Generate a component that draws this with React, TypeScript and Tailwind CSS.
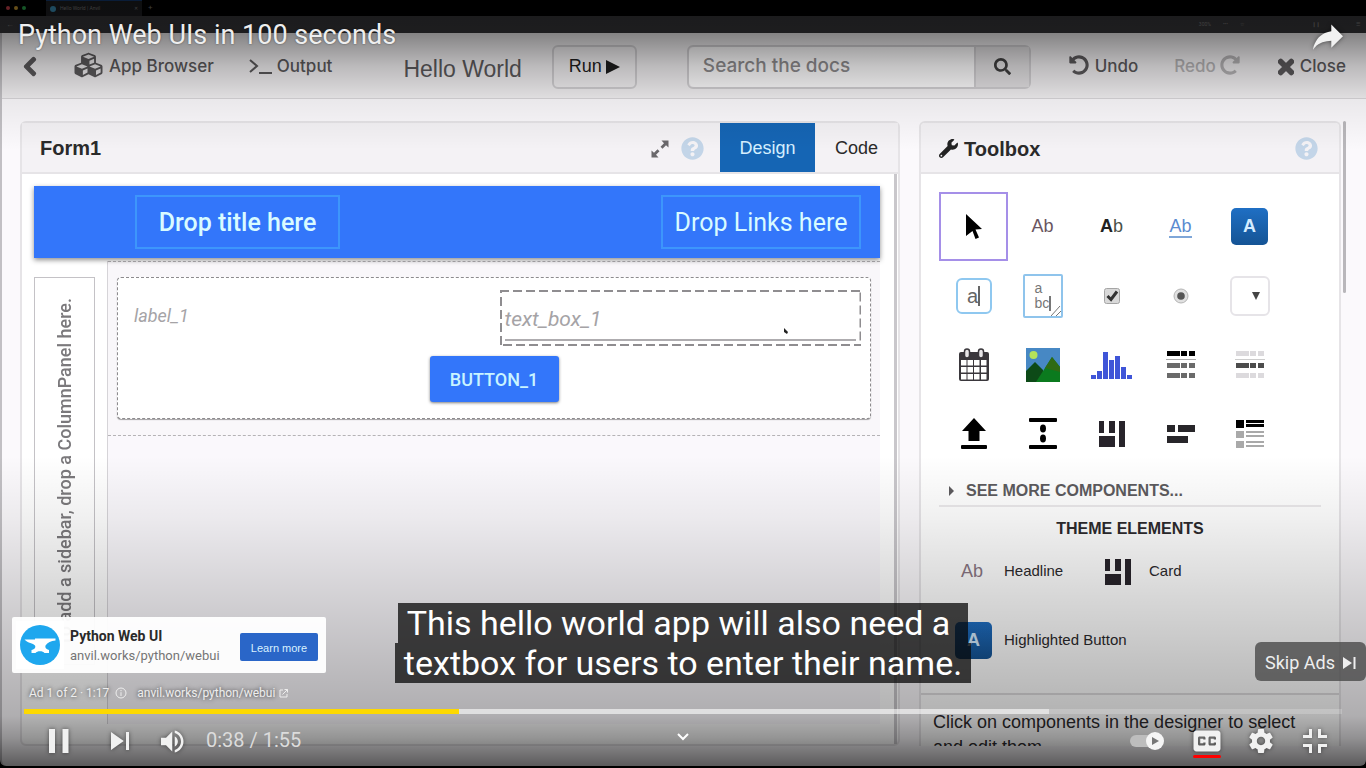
import type { ReactNode } from "react";
import {
  FaChevronLeft,
  FaCubes,
  FaQuestionCircle,
  FaRedoAlt,
  FaSearch,
  FaTimes,
  FaUndoAlt,
  FaWrench,
} from "react-icons/fa";

/* ---------- Toolbox drawings ---------- */

function PointerIcon() {
  return (
    <svg viewBox="0 0 16 26" className="h-[26px] w-4">
      <path d="M0 0 16 15 9.500 15.500 13 23.500 9.500 25 6.500 17 0 22Z" fill="#000" />
    </svg>
  );
}

function CheckIcon() {
  return (
    <svg viewBox="0 0 16 16" className="size-4">
      <rect x="0.5" y="0.5" width="15" height="15" rx="2" fill="#d9d9d9" stroke="#a5a5a5" />
      <path d="M3.500 8 7 11.500 13 3.500" fill="none" stroke="#333" strokeWidth="3" />
    </svg>
  );
}

function RadioIcon() {
  return (
    <svg viewBox="0 0 16 16" className="size-4">
      <circle cx="8" cy="8" r="7" fill="#e0e0e0" stroke="#b5b5b5" />
      <circle cx="8" cy="8" r="3.800" fill="#555" />
    </svg>
  );
}

function CalendarIcon() {
  return (
    <svg viewBox="0 0 32 34" className="h-[34px] w-8">
      <rect x="1" y="4" width="30" height="29" rx="2" fill="#3a373c" />
      <g fill="#fff">
        {[12, 19, 26].map((y) =>
          [3, 9.5, 16, 23].map((x) => <rect key={`${x}-${y}`} x={x} y={y} width="5.500" height="5.500" />),
        )}
      </g>
      <rect x="6.500" y="1" width="5" height="9" rx="2.500" fill="#e8e6e8" stroke="#3a373c" strokeWidth="1.500" />
      <rect x="20.500" y="1" width="5" height="9" rx="2.500" fill="#e8e6e8" stroke="#3a373c" strokeWidth="1.500" />
    </svg>
  );
}

function ImageIcon() {
  return (
    <svg viewBox="0 0 34 34" className="size-[34px]">
      <rect width="34" height="34" fill="#4788c4" />
      <circle cx="7.500" cy="7" r="4" fill="#b6e35a" />
      <path d="M0 23 9 14 17 22 17 34 0 34Z" fill="#0d4a17" />
      <path d="M10 34 26 9 34 19V34Z" fill="#0b7a1e" />
      <path d="M19 20 26 9 34 19V24Z" fill="#2f6a14" />
    </svg>
  );
}

function PlotIcon() {
  const bars = [4, 8, 27, 19, 23, 12, 4];
  return (
    <svg viewBox="0 0 42 28" className="h-7 w-[42px]">
      {bars.map((h, i) => (
        <rect key={i} x={i * 6} y={28 - h} width="5" height={h} fill="#3f55d8" />
      ))}
    </svg>
  );
}

function GridRow({ y, fill }: { y: number; fill: string }) {
  return (
    <g fill={fill}>
      <rect x="1" y={y} width="13" height="5" />
      <rect x="15" y={y} width="6" height="5" />
      <rect x="23" y={y} width="6" height="5" />
    </g>
  );
}

function DataGridIcon() {
  return (
    <svg viewBox="0 0 30 28" className="h-7 w-[30px]">
      <GridRow y={0} fill="#000" />
      <rect y="8" width="30" height="1" fill="#aaa" />
      <GridRow y={12} fill="#6a6a6a" />
      <GridRow y={22} fill="#6a6a6a" />
    </svg>
  );
}

function DataRowIcon() {
  return (
    <svg viewBox="0 0 30 28" className="h-7 w-[30px]">
      <GridRow y={0} fill="#dcdadd" />
      <rect y="8" width="30" height="1" fill="#ccc" />
      <GridRow y={12} fill="#4c4c4c" />
      <GridRow y={22} fill="#dcdadd" />
    </svg>
  );
}

function UploadIcon() {
  return (
    <svg viewBox="0 0 26 31" className="h-[31px] w-[26px]">
      <path d="M13 0 25 13H18.500V23H7.500V13H1Z" />
      <rect y="27" width="26" height="4" rx="1" />
    </svg>
  );
}

function SpacerIcon() {
  return (
    <svg viewBox="0 0 28 31" className="h-[31px] w-7">
      <rect width="28" height="4" rx="1" />
      <ellipse cx="14" cy="10.500" rx="3" ry="4" />
      <ellipse cx="14" cy="20.500" rx="3" ry="4" />
      <rect y="27" width="28" height="4" rx="1" />
    </svg>
  );
}

function ColumnsIcon() {
  return (
    <svg viewBox="0 0 26 26" className="size-[26px]" fill="#28242b">
      <rect width="5" height="12" />
      <rect x="10" width="6" height="12" />
      <rect y="15" width="16" height="11" />
      <rect x="20" width="6" height="26" />
    </svg>
  );
}

function FlowIcon() {
  return (
    <svg viewBox="0 0 28 18" className="h-[18px] w-7" fill="#28262a">
      <rect width="8" height="7" />
      <rect x="11" width="17" height="7" />
      <rect y="11" width="21" height="7" />
    </svg>
  );
}

function RepeatIcon() {
  return (
    <svg viewBox="0 0 28 28" className="size-7">
      <g fill="#000">
        <rect width="8" height="8" />
        <rect x="10" y="0" width="18" height="3" />
        <rect x="10" y="4" width="18" height="3" />
      </g>
      <g fill="#a9a9a9">
        <rect y="11" width="8" height="7" />
        <rect x="10" y="11" width="18" height="2" />
        <rect x="10" y="15" width="18" height="2" />
        <rect y="21" width="8" height="7" />
        <rect x="10" y="21" width="18" height="2" />
        <rect x="10" y="25" width="18" height="2" />
      </g>
    </svg>
  );
}

function ButtonChip() {
  return (
    <span className="flex size-[37px] items-center justify-center rounded-[5px] bg-linear-to-b from-[#1f6fc4] to-[#155495] text-[18px] font-bold text-[#d5ecff]">
      A
    </span>
  );
}

function TextAreaChip() {
  return (
    <span className="relative flex h-11 w-10 flex-col justify-center rounded-xs border-2 border-[#8fc4ec] pl-2.5 text-left text-[14px] leading-[15px] text-[#777]">
      <span>a</span>
      <span className="self-start border-r-2 border-[#777]">bc</span>
      <svg viewBox="0 0 10 10" className="absolute right-0 bottom-0 size-2.5" stroke="#777">
        <path d="M0 10 9 0M5 10 10 5" fill="none" />
      </svg>
    </span>
  );
}

const tools: { name: string; icon: ReactNode }[] = [
  { name: "Pointer", icon: <PointerIcon /> },
  { name: "Label", icon: <span className="text-[18px] text-[#6a5561]">Ab</span> },
  {
    name: "Rich text",
    icon: (
      <span className="text-[18px] text-[#4a5148]">
        <b className="text-[#222]">A</b>b
      </span>
    ),
  },
  { name: "Link", icon: <span className="border-b-2 border-[#7fa6d8] text-[18px] leading-5 text-[#5b8bd0]">Ab</span> },
  { name: "Button", icon: <ButtonChip /> },
  {
    name: "Text box",
    icon: (
      <span className="flex size-9 items-center justify-center rounded-md border-2 border-[#8fc8f0] text-[20px] text-[#666]">
        <span className="border-r-2 border-[#666] leading-5">a</span>
      </span>
    ),
  },
  { name: "Text area", icon: <TextAreaChip /> },
  { name: "Check box", icon: <CheckIcon /> },
  { name: "Radio button", icon: <RadioIcon /> },
  {
    name: "Drop down",
    icon: (
      <span className="flex size-10 items-center justify-end rounded-md border-2 border-[#e6e4e8] pr-2">
        <svg viewBox="0 0 8 8" className="size-2" fill="#444">
          <path d="M0 0H8L4 8Z" />
        </svg>
      </span>
    ),
  },
  { name: "Date picker", icon: <CalendarIcon /> },
  { name: "Image", icon: <ImageIcon /> },
  { name: "Plot", icon: <PlotIcon /> },
  { name: "Data grid", icon: <DataGridIcon /> },
  { name: "Data row", icon: <DataRowIcon /> },
  { name: "File upload", icon: <UploadIcon /> },
  { name: "Spacer", icon: <SpacerIcon /> },
  { name: "Column panel", icon: <ColumnsIcon /> },
  { name: "Flow panel", icon: <FlowIcon /> },
  { name: "Repeating panel", icon: <RepeatIcon /> },
];

/* ---------- Recorded frame ---------- */

function BrowserChrome() {
  return (
    <div className="shrink-0 text-[5px] leading-none text-[#777]">
      <div className="flex h-4 items-center bg-black pl-1.5">
        <div className="flex w-10 gap-1">
          <span className="size-1 rounded-full bg-[#c8404a]" />
          <span className="size-1 rounded-full bg-[#c89a30]" />
          <span className="size-1 rounded-full bg-[#2aa84c]" />
        </div>
        <div className="flex h-full w-24 items-center gap-1 border-t border-[#143a70] bg-[#1c1d20] px-1">
          <span className="size-1.5 rounded-full bg-[#3a90b8]" />
          <span className="flex-1">Hello World | Anvil</span>
          <span>✕</span>
        </div>
        <span className="pl-1.5 text-[8px]">+</span>
      </div>
      <div className="flex h-[17px] items-center justify-between bg-[#353538] px-1.5">
        <span className="text-[8px]">←</span>
        <span className="flex gap-3">
          <span>300%</span>
          <span>•••</span>
          <span>☆</span>
          <span className="pr-1 pl-14">❙❙</span>
          <span className="pl-5">☰</span>
        </span>
      </div>
    </div>
  );
}

function TopBar() {
  return (
    <nav className="flex h-[66px] shrink-0 items-center border-b border-[#d8d6d9] bg-[#f0eef0] pt-0.5 pr-5 pl-5 font-['Inter',sans-serif] text-[17px] font-medium text-[#5b595b]">
      <button aria-label="Back" className="mr-9">
        <FaChevronLeft className="h-[21px] w-4" stroke="currentColor" strokeWidth="36" />
      </button>
      <button className="mr-[35px] flex items-center gap-1.5">
        <FaCubes className="mb-1 h-7 w-[29px]" />
        App Browser
      </button>
      <button className="mr-[71px] flex items-center gap-1">
        <svg viewBox="0 0 24 16" className="h-4 w-6" fill="none" stroke="currentColor" strokeWidth="2">
          <path d="M1 1 8 7 1 13M10 14H23" />
        </svg>
        Output
      </button>
      <h1 className="mr-[30px] pt-1.5 font-['Liberation_Sans',Arial,sans-serif] text-[23px] font-normal">Hello World</h1>
      <button className="mr-[50px] flex h-11 w-[85px] items-center justify-center gap-1 rounded-md border-2 border-[#d0ced1] font-['Liberation_Sans',Arial,sans-serif] text-[18px] text-[#1d1d1d]">
        Run
        <svg viewBox="0 0 14 14" className="size-3.5" fill="currentColor">
          <path d="M0 0 14 7 0 14Z" />
        </svg>
      </button>
      <form className="mr-[38px] flex h-11 min-w-0 flex-1 rounded-md border-2 border-[#d0ced1]">
        <input
          aria-label="Search the docs"
          placeholder="Search the docs"
          className="min-w-0 flex-1 rounded-l-md bg-[#fbfafb] px-3.5 text-[19px] font-medium placeholder:text-[#8d8b8d]"
        />
        <button
          type="button"
          aria-label="Search"
          className="flex w-[55px] items-center justify-center border-l-2 border-[#d0ced1] bg-[#e2e0e2]"
        >
          <FaSearch className="size-[17px] text-[#3f3e3f]" />
        </button>
      </form>
      <button className="mr-9 flex items-center gap-1.5">
        <FaUndoAlt className="mb-1 size-5" />
        Undo
      </button>
      <button className="mr-[38px] flex items-center gap-1 text-[#b4b2b4]" disabled>
        Redo
        <FaRedoAlt className="mb-1 size-5" />
      </button>
      <button className="flex items-center gap-1.5">
        <FaTimes className="h-[22px] w-4" stroke="currentColor" strokeWidth="40" />
        Close
      </button>
    </nav>
  );
}

function FormCanvas() {
  return (
    <div className="flex min-h-0 flex-1 rounded-b-md bg-white">
      <div className="flex min-w-0 flex-1 flex-col pt-3 pr-3.5 pl-3">
        <header className="z-10 flex h-[72px] shrink-0 items-center justify-between bg-[#3376fa] pr-[19px] pl-[101px] text-[25px] text-[#d9fbff] shadow-[0_2px_5px_rgba(0,0,0,0.45)]">
          <span className="flex h-[54px] w-[205px] items-center justify-center border-2 border-[#3d96fb] pt-0.5 font-medium">
            Drop title here
          </span>
          <span className="flex h-[54px] w-[200px] items-center justify-center border-2 border-[#3d96fb] pt-0.5">
            Drop Links here
          </span>
        </header>
        <div className="flex min-h-0 flex-1 gap-3 pt-[3px]">
          <div className="mt-4 flex h-[388px] w-[61px] shrink-0 items-start justify-center border border-[#c4c2c6] pt-5">
            <span className="rotate-180 text-[18px] font-medium whitespace-nowrap text-[#7b797c] [writing-mode:vertical-rl]">
              To add a sidebar, drop a ColumnPanel here.
            </span>
          </div>
          <div className="mb-5 min-w-0 flex-1 border-l border-[#d6d4d8] bg-[#faf8fc]">
            <div className="border-y border-dashed border-[#b5b3b6] bg-[#f9f7fa] px-[9px] pt-[15px] pb-4">
              <div className="rounded border border-dashed border-[#8d8b8e] bg-white px-[9px] pt-3 pb-4 shadow-[0_1px_1px_rgba(0,0,0,0.35)]">
                <div className="grid grid-cols-2 gap-[11px]">
                  <span className="pt-3 pl-[7px] text-[18px] text-[#a5a3a6] italic">label_1</span>
                  <div className="relative h-14 px-[5px] pb-[5px]">
                    <svg className="absolute inset-0 h-full w-full" fill="none" stroke="#8f8d90" strokeWidth="4" strokeDasharray="9 4">
                      <rect width="100%" height="100%" />
                    </svg>
                    <input
                      aria-label="text_box_1"
                      placeholder="text_box_1"
                      className="relative h-full w-full border-b-2 border-[#aeacaf] pt-2 text-[21px] italic placeholder:text-[#a5a3a6]"
                    />
                    <svg viewBox="0 0 4 6" className="absolute right-[73px] bottom-3 h-1.5 w-1" fill="#222">
                      <path d="M0 0 4 4 3 6 0 4Z" />
                    </svg>
                  </div>
                </div>
                <div className="flex justify-center pt-2.5">
                  <button className="h-[46px] w-[129px] rounded-[3px] bg-[#3376fa] text-[18px] font-medium text-[#c9f4ff] shadow-[0_1px_3px_rgba(0,0,0,0.5)]">
                    BUTTON_1
                  </button>
                </div>
              </div>
            </div>
          </div>
        </div>
      </div>
      <div className="mr-px w-[3px] bg-[#c9c7cb]" />
    </div>
  );
}

function FormPanel() {
  return (
    <section className="flex min-w-0 flex-1 flex-col rounded-md border-2 border-[#e6e4e7]">
      <div className="flex h-[51px] shrink-0 items-stretch border-b-2 border-[#e6e4e7] bg-[#f4f2f5] pl-[18px] font-['Liberation_Sans',Arial,sans-serif] text-[18px]">
        <h2 className="flex flex-1 items-center text-[20px] font-bold text-[#2a2a2a]">Form1</h2>
        <button aria-label="Expand" className="mr-3 pt-0.5 text-[#6a686b]">
          <svg viewBox="0 0 18 18" className="size-[18px]" fill="currentColor">
            <path d="M10.500 0.500H17.500V7.500L15 5.200 11.500 8.700 9.500 6.700 13 3.200ZM7.500 17.500H0.500V10.500L3 12.800 6.500 9.300 8.500 11.300 5 14.800Z" />
          </svg>
        </button>
        <button aria-label="Form help" className="mr-4 pt-0.5 text-[#c3d5e8]">
          <FaQuestionCircle className="size-[23px]" />
        </button>
        <button className="w-[95px] bg-[#1565b4] pt-0.5 text-[#d5efff]">Design</button>
        <button className="w-[83px] pt-0.5 text-[#2a2a2a]">Code</button>
      </div>
      <FormCanvas />
    </section>
  );
}

function Toolbox() {
  return (
    <section className="flex w-[422px] shrink-0 flex-col overflow-hidden rounded-t-md border-2 border-b-0 border-[#e6e4e7] bg-white font-['Liberation_Sans',Arial,sans-serif] text-[15px] text-[#2c2a2d]">
      <div className="flex h-[51px] shrink-0 items-center gap-1.5 border-b-2 border-[#e6e4e7] bg-[#f4f2f5] pt-0.5 pr-[21px] pl-[18px]">
        <FaWrench className="size-[19px] text-[#222]" />
        <h2 className="flex-1 text-[20px] font-bold text-[#2a2a2a]">Toolbox</h2>
        <button aria-label="Toolbox help" className="text-[#c3d5e8]">
          <FaQuestionCircle className="size-[23px]" />
        </button>
      </div>
      <div className="px-[18px] pt-[18px]">
        <div className="grid w-[345px] grid-cols-5">
          {tools.map((tool, i) => (
            <button
              key={tool.name}
              aria-label={tool.name}
              className={
                i === 0
                  ? "flex h-[69px] items-center justify-center border-2 border-[#a58fe8]"
                  : "flex h-[69px] items-center justify-center"
              }
            >
              {tool.icon}
            </button>
          ))}
        </div>
        <button className="flex h-[39px] w-full items-center gap-3 border-b-2 border-[#ebe9eb] pt-2 pl-2.5 text-[16px] font-bold text-[#5d5b5e]">
          <svg viewBox="0 0 5 10" className="h-2.5 w-[5px]" fill="currentColor">
            <path d="M0 0 5 5 0 10Z" />
          </svg>
          SEE MORE COMPONENTS...
        </button>
        <h3 className="pt-2.5 text-center text-[16px] leading-6 font-bold">THEME ELEMENTS</h3>
      </div>
      <div className="flex h-[61px] shrink-0 items-center pl-10">
        <span className="w-[43px] text-[18px] text-[#8a7683]">Ab</span>
        <span className="w-[101px]">Headline</span>
        <span className="w-11">
          <ColumnsIcon />
        </span>
        <span>Card</span>
      </div>
      <div className="flex h-[77px] shrink-0 items-center gap-3 pl-[34px]">
        <ButtonChip />
        <span>Highlighted Button</span>
      </div>
      <p className="mt-3.5 shrink-0 border-t-2 border-[#e0dee0] px-3 pt-[15px] text-[18px] leading-[25px]">
        Click on components in the designer to select and edit them.
      </p>
    </section>
  );
}

function RecordedFrame() {
  return (
    <div className="absolute inset-0 flex flex-col bg-black pb-0.5 font-['Roboto',sans-serif]">
      <BrowserChrome />
      <div className="flex min-h-0 flex-1 flex-col overflow-hidden rounded-b-md border-l-2 border-[#c2c0c4] bg-[#fbf9fc]">
        <TopBar />
        <main className="flex min-h-0 flex-1 pt-[22px] pr-5 pb-5 pl-[18px]">
          <FormPanel />
          <div className="w-[19px] shrink-0" />
          <Toolbox />
          <div className="ml-0.5 h-[172px] w-[3px] rounded-sm bg-[#b9b7bb]" />
        </main>
      </div>
    </div>
  );
}

/* ---------- Player controls ---------- */

function PlayerIcon({ d, small = false }: { d: string; small?: boolean }) {
  return (
    <svg
      viewBox="0 0 36 36"
      fill="#f1f1f1"
      fillRule="evenodd"
      className={
        small
          ? "size-[45px] drop-shadow-[0_0_2px_rgba(0,0,0,0.5)]"
          : "size-[54px] drop-shadow-[0_0_2px_rgba(0,0,0,0.5)]"
      }
    >
      <path d={d} />
    </svg>
  );
}

const icons = {
  share:
    "m 20.20,14.19 0,-4.45 7.79,7.79 -7.79,7.56 0,-4.56 C 16.27,20.69 12.10,21.81 9.34,24.76 8.80,25.13 7.60,27.29 8.12,25.65 9.08,21.32 11.80,17.18 15.98,15.38 c 1.33,-0.60 2.76,-0.98 4.21,-1.19 z",
  pause: "M 12,26 16,26 16,10 12,10 z M 21,26 25,26 25,10 21,10 z",
  next: "M 12,24 20.5,18 12,12 V 24 z M 22,12 v 12 h 2 V 12 h -2 z",
  volume:
    "M8,21 L12,21 L17,26 L17,10 L12,15 L8,15 L8,21 Z M19,14 L19,22 C20.48,21.32 21.5,19.77 21.5,18 C21.5,16.26 20.48,14.74 19,14 Z M19,11.29 C21.89,12.15 24,14.83 24,18 C24,21.17 21.89,23.85 19,24.71 L19,26.77 C23.01,25.86 26,22.28 26,18 C26,13.72 23.01,10.14 19,9.23 L19,11.29 Z",
  captions:
    "M11,11 C9.89,11 9,11.9 9,13 L9,23 C9,24.1 9.89,25 11,25 L25,25 C26.1,25 27,24.1 27,23 L27,13 C27,11.9 26.1,11 25,11 L11,11 Z M17,17 L15.5,17 L15.5,16.5 L13.5,16.5 L13.5,19.5 L15.5,19.5 L15.5,19 L17,19 L17,20 C17,20.55 16.55,21 16,21 L13,21 C12.45,21 12,20.55 12,20 L12,16 C12,15.45 12.45,15 13,15 L16,15 C16.55,15 17,15.45 17,16 L17,17 Z M24,17 L22.5,17 L22.5,16.5 L20.5,16.5 L20.5,19.5 L22.5,19.5 L22.5,19 L24,19 L24,20 C24,20.55 23.55,21 23,21 L20,21 C19.45,21 19,20.55 19,20 L19,16 C19,15.45 19.45,15 20,15 L23,15 C23.55,15 24,15.45 24,16 L24,17 Z",
  settings:
    "m 23.94,18.78 c .03,-0.25 .05,-0.51 .05,-0.78 0,-0.27 -0.02,-0.52 -0.05,-0.78 l 1.68,-1.32 c .15,-0.12 .19,-0.33 .09,-0.51 l -1.6,-2.76 c -0.09,-0.17 -0.31,-0.24 -0.48,-0.17 l -1.99,.8 c -0.41,-0.32 -0.86,-0.58 -1.35,-0.78 l -0.30,-2.12 c -0.02,-0.19 -0.19,-0.33 -0.39,-0.33 l -3.2,0 c -0.2,0 -0.36,.14 -0.39,.33 l -0.30,2.12 c -0.48,.2 -0.93,.47 -1.35,.78 l -1.99,-0.8 c -0.18,-0.07 -0.39,0 -0.48,.17 l -1.6,2.76 c -0.10,.17 -0.05,.39 .09,.51 l 1.68,1.32 c -0.03,.25 -0.05,.52 -0.05,.78 0,.26 .02,.52 .05,.78 l -1.68,1.32 c -0.15,.12 -0.19,.33 -0.09,.51 l 1.6,2.76 c .09,.17 .31,.24 .48,.17 l 1.99,-0.8 c .41,.32 .86,.58 1.35,.78 l .30,2.12 c .02,.19 .19,.33 .39,.33 l 3.2,0 c .2,0 .36,-0.14 .39,-0.33 l .30,-2.12 c .48,-0.2 .93,-0.47 1.35,-0.78 l 1.99,.8 c .18,.07 .39,0 .48,-0.17 l 1.6,-2.76 c .09,-0.17 .05,-0.39 -0.09,-0.51 l -1.68,-1.32 0,0 z m -5.94,2.01 c -1.54,0 -2.8,-1.25 -2.8,-2.8 0,-1.54 1.25,-2.8 2.8,-2.8 1.54,0 2.8,1.25 2.8,2.8 0,1.54 -1.25,2.8 -2.8,2.8 z",
  exitFullscreen:
    "m 14,14 -4,0 0,2 6,0 0,-6 -2,0 0,4 z M 22,14 l 0,-4 -2,0 0,6 6,0 0,-2 -4,0 z M 20,26 l 2,0 0,-4 4,0 0,-2 -6,0 0,6 z M 10,22 l 4,0 0,4 2,0 0,-6 -6,0 0,2 z",
};

function AnvilLogo() {
  return (
    <svg viewBox="0 0 48 48" className="size-12 bg-white">
      <circle cx="24" cy="24" r="20" fill="#1ea7ee" />
      <path
        d="M8.500 18.500H19V17.500H39.500V19.500C35 20 31.500 21.500 29.500 24.500C28.800 26.500 30 28.500 33 29V32H28.500C27 29.800 21 29.800 19.500 32H15.500V29C18.500 28.500 20 26.500 19 24.500C17 22 12 22.500 8.500 18.500Z"
        fill="#fff"
      />
    </svg>
  );
}

function AdCard() {
  return (
    <aside className="mb-2.5 ml-3 flex h-14 w-[314px] items-center rounded-xs bg-white/95 pr-2 pl-1">
      <AnvilLogo />
      <div className="ml-1.5 flex-1 pt-0.5 leading-5">
        <p className="text-[14px] font-bold text-[#2a2a2a]">Python Web UI</p>
        <p className="text-[13px] text-[#757575]">anvil.works/python/webui</p>
      </div>
      <button className="mt-1 h-7 w-[78px] rounded-xs bg-[#2a66c8] pt-0.5 font-['Liberation_Sans',Arial,sans-serif] text-[11px] text-[#d9f1ff]">
        Learn more
      </button>
    </aside>
  );
}

function Captions() {
  return (
    <p className="flex flex-col items-center text-[34px] leading-10 whitespace-nowrap text-white">
      <span className="bg-[#080808]/75 pr-[18px] pl-[9px]">This hello world app will also need a</span>
      <span className="bg-[#080808]/75 px-[9px]">textbox for users to enter their name.</span>
    </p>
  );
}

function Controls() {
  return (
    <div className="grid h-[54px] grid-cols-[1fr_auto_1fr] items-center px-6">
      <div className="flex items-center">
        <button aria-label="Pause" className="ml-[7px]">
          <PlayerIcon d={icons.pause} />
        </button>
        <button aria-label="Next" className="ml-2">
          <PlayerIcon d={icons.next} />
        </button>
        <button aria-label="Mute" className="ml-1">
          <PlayerIcon d={icons.volume} small />
        </button>
        <span className="ml-2.5 pb-0.5 text-[20px] text-[#dcdcdc]">0:38 / 1:55</span>
      </div>
      <button aria-label="More videos" className="mb-2">
        <svg viewBox="0 0 12 8" className="h-2 w-3" fill="none" stroke="#fff" strokeWidth="2">
          <path d="M1 1 6 6 11 1" />
        </svg>
      </button>
      <div className="flex items-center justify-end">
        <button aria-label="Autoplay" className="mr-4">
          <svg viewBox="0 0 34 18" className="h-[18px] w-[34px]">
            <rect x="0" y="3" width="28" height="12" rx="6" fill="#bdbdbd" />
            <circle cx="25" cy="9" r="9" fill="#f5f5f5" />
            <path d="M22 5 29 9 22 13Z" fill="#777" />
          </svg>
        </button>
        <button aria-label="Subtitles" className="relative">
          <PlayerIcon d={icons.captions} />
          <span className="absolute inset-x-[13px] bottom-2.5 h-[3px] rounded-xs bg-[#f00]" />
        </button>
        <button aria-label="Settings">
          <PlayerIcon d={icons.settings} />
        </button>
        <button aria-label="Exit full screen">
          <PlayerIcon d={icons.exitFullscreen} />
        </button>
      </div>
    </div>
  );
}

function PlayerOverlay() {
  return (
    <div className="relative z-20 flex h-full flex-col justify-between font-['Roboto',sans-serif]">
      <header className="flex h-[74px] items-center justify-between pr-[11px] pb-1 pl-[18px] text-[27px] text-[#eee]">
        <a href="#video" className="[text-shadow:0_0_2px_rgba(0,0,0,0.5)]">
          Python Web UIs in 100 seconds
        </a>
        <button aria-label="Share" className="pt-1">
          <PlayerIcon d={icons.share} />
        </button>
      </header>
      <footer>
        <div className="grid grid-cols-[1fr_auto_1fr] items-end">
          <AdCard />
          <Captions />
          <button className="mb-0.5 flex h-[39px] items-center gap-2 justify-self-end rounded-md bg-[#4a4a4a]/80 pt-0.5 pr-2.5 pl-2.5 text-[18px] text-[#eee]">
            Skip Ads
            <svg viewBox="0 0 13 12" className="h-3 w-[13px]" fill="#eee">
              <path d="M0 0 9 6 0 12ZM10.500 0H12.500V12H10.500Z" />
            </svg>
          </button>
        </div>
        <div className="flex h-[26px] items-center pb-1.5 pl-[29px] text-[12px] text-[#eee] [text-shadow:0_0_4px_rgba(0,0,0,0.75)]">
          <span>Ad 1 of 2 · 1:17</span>
          <svg viewBox="0 0 12 12" className="mr-2.5 ml-1.5 size-3" fill="none" stroke="currentColor">
            <circle cx="6" cy="6" r="5" />
            <path d="M6 5.200V9M6 3V4.200" />
          </svg>
          <a href="#advertiser" className="flex items-center gap-1">
            anvil.works/python/webui
            <svg viewBox="0 0 9 9" className="size-[9px]" fill="none" stroke="currentColor">
              <path d="M4 1H1V8H8V5M5.500 0.500H8.500V3.500M8.500 0.500 3.500 5.500" />
            </svg>
          </a>
        </div>
        <div className="mx-6 flex h-[5px] bg-white/20">
          <div className="w-[33%] bg-[#fdd900]" />
          <div className="w-[44.800%] bg-white/50" />
        </div>
        <Controls />
      </footer>
    </div>
  );
}

export default function App() {
  return (
    <div className="relative h-screen overflow-hidden bg-black">
      <RecordedFrame />
      <div className="absolute inset-x-0 top-0 z-10 h-40 bg-[linear-gradient(to_bottom,rgba(0,0,0,0.5)_0px,rgba(0,0,0,0.45)_33px,rgba(0,0,0,0.22)_66px,rgba(0,0,0,0.07)_98px,rgba(0,0,0,0)_150px)]" />
      <div className="absolute inset-x-0 bottom-0 z-10 h-80 bg-[linear-gradient(to_top,rgba(0,0,0,0.65)_0px,rgba(0,0,0,0.42)_30px,rgba(0,0,0,0.3)_52px,rgba(0,0,0,0.27)_78px,rgba(0,0,0,0.15)_178px,rgba(0,0,0,0.06)_250px,rgba(0,0,0,0)_312px)]" />
      <PlayerOverlay />
    </div>
  );
}
